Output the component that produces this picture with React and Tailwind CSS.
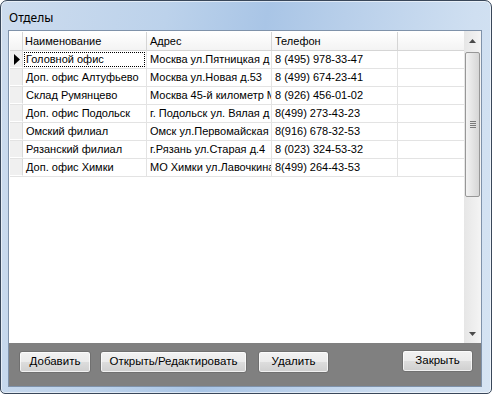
const rows = [
  ['Головной офис', 'Москва ул.Пятницкая д', '8 (495) 978-33-47'],
  ['Доп. офис Алтуфьево', 'Москва ул.Новая д.53', '8 (499) 674-23-41'],
  ['Склад Румянцево', 'Москва 45-й километр М', '8 (926) 456-01-02'],
  ['Доп. офис Подольск', 'г. Подольск ул. Вялая д', '8(499) 273-43-23'],
  ['Омский филиал', 'Омск ул.Первомайская д', '8(916) 678-32-53'],
  ['Рязанский филиал', 'г.Рязань ул.Старая д.4', '8 (023) 324-53-32'],
  ['Доп. офис Химки', 'МО Химки ул.Лавочкина', '8(499) 264-43-53'],
];

const Cell = ({ w, children, focus }) => (
  <div className={`${w} shrink-0 h-full border-r border-[#e3e3e3] overflow-hidden whitespace-nowrap relative`}>
    {focus && <div className="absolute inset-[1px] border border-dotted border-black" />}
    <span className="block pl-[3px] leading-[17px]">{children}</span>
  </div>
);

const Button = ({ children, className = '' }) => (
  <button
    className={`h-[22px] rounded-[3px] border border-[#707070] bg-[linear-gradient(to_bottom,#f2f2f2_0%,#ebebeb_50%,#dddddd_51%,#cfcfcf_100%)] shadow-[inset_0_0_0_1px_rgba(255,255,255,0.7)] text-[11.5px] text-black ${className}`}
  >
    {children}
  </button>
);

const Scrollbar = () => (
  <div className="w-[17px] shrink-0 flex flex-col bg-[linear-gradient(to_right,#e6e6e6,#f4f4f4)]">
    <div className="h-[19px] flex items-center justify-center">
      <svg width="7" height="4" viewBox="0 0 7 4"><path d="M3.5 0L7 4H0z" fill="#4a4a4a" /></svg>
    </div>
    <div className="mx-[1px] mt-[2px] h-[145px] rounded-[2px] border border-[#979797] bg-[linear-gradient(to_right,#f3f3f3,#e4e4e4_50%,#d6d6d6)] flex flex-col items-center justify-center gap-[1px]">
      <div className="w-[6px] h-[1px] bg-[#7a7a7a]" />
      <div className="w-[6px] h-[1px] bg-[#7a7a7a]" />
      <div className="w-[6px] h-[1px] bg-[#7a7a7a]" />
      <div className="w-[6px] h-[1px] bg-[#7a7a7a]" />
    </div>
    <div className="flex-1" />
    <div className="h-[18px] flex items-center justify-center">
      <svg width="7" height="4" viewBox="0 0 7 4"><path d="M0 0H7L3.5 4z" fill="#4a4a4a" /></svg>
    </div>
  </div>
);

export default function App() {
  return (
    <div className="w-[492px] h-[394px] flex flex-col rounded-t-[7px] rounded-b-[5px] border border-[#39475a] shadow-[inset_0_0_0_1px_rgba(255,255,255,0.55)] bg-[linear-gradient(100deg,#cddcee_0%,#bcd2eb_30%,#a9c5e6_48%,#b8cfea_62%,#cfdff1_85%,#d6e4f3_100%)] font-['Liberation_Sans',sans-serif]">
      <div className="h-[29px] shrink-0 flex items-center pl-[8px] pt-[4px] text-[12px] text-black font-['Noto_Sans',sans-serif]">
        Отделы
      </div>
      <div className="flex-1 ml-[7px] mr-[9px] mb-[6px] border border-[#7f92aa] flex flex-col bg-white">
        <div className="flex-1 flex min-h-0">
          <div className="flex-1 pl-[1px] pt-[1px] text-[11px] text-black">
            <div className="flex h-[19px] border-b border-[#d5d5d5] bg-[linear-gradient(to_bottom,#ffffff,#f3f3f3)]">
              <div className="w-[13px] shrink-0 h-full border-r border-[#d5d5d5]" />
              <div className="w-[124px] shrink-0 border-r border-[#d5d5d5] pl-[2px] leading-[18px]">Наименование</div>
              <div className="w-[125px] shrink-0 border-r border-[#d5d5d5] pl-[3px] leading-[18px]">Адрес</div>
              <div className="w-[126px] shrink-0 border-r border-[#d5d5d5] pl-[3px] leading-[18px]">Телефон</div>
            </div>
            {rows.map((r, i) => (
              <div key={i} className="flex h-[18px] border-b border-[#e3e3e3]">
                <div className="w-[13px] shrink-0 h-full bg-[#f0f0f0] border-r border-[#d9d9d9] border-b border-b-white flex items-center justify-center">
                  {i === 0 && (
                    <svg className="shrink-0 ml-[1px]" width="6" height="11" viewBox="0 0 6 11"><path d="M0 0L6 5.5L0 11z" fill="#000" /></svg>
                  )}
                </div>
                <Cell w="w-[124px]" focus={i === 0}>{r[0]}</Cell>
                <Cell w="w-[125px]">{r[1]}</Cell>
                <Cell w="w-[126px]">{r[2]}</Cell>
              </div>
            ))}
          </div>
          <Scrollbar />
        </div>
        <div className="h-[43px] shrink-0 bg-[#808080] flex items-start pt-[8px] pl-[10px] pr-[8px]">
          <Button className="w-[72px]">Добавить</Button>
          <Button className="w-[147px] ml-[9px]">Открыть/Редактировать</Button>
          <Button className="w-[71px] ml-[11px]">Удалить</Button>
          <Button className="w-[71px] ml-auto -mt-[1px]">Закрыть</Button>
        </div>
      </div>
    </div>
  );
}
